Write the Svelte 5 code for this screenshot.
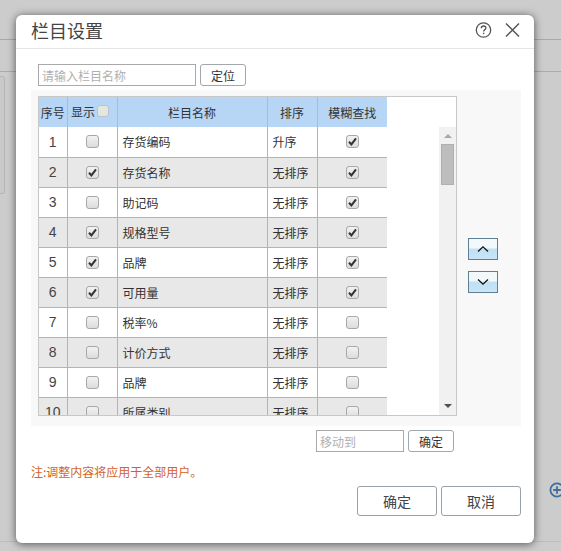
<script>
  const rows = [
    { no: 1, show: false, name: '存货编码', sort: '升序', fuzzy: true },
    { no: 2, show: true, name: '存货名称', sort: '无排序', fuzzy: true },
    { no: 3, show: false, name: '助记码', sort: '无排序', fuzzy: true },
    { no: 4, show: true, name: '规格型号', sort: '无排序', fuzzy: true },
    { no: 5, show: true, name: '品牌', sort: '无排序', fuzzy: true },
    { no: 6, show: true, name: '可用量', sort: '无排序', fuzzy: true },
    { no: 7, show: false, name: '税率%', sort: '无排序', fuzzy: false },
    { no: 8, show: false, name: '计价方式', sort: '无排序', fuzzy: false },
    { no: 9, show: false, name: '品牌', sort: '无排序', fuzzy: false },
    { no: 10, show: false, name: '所属类别', sort: '无排序', fuzzy: false }
  ];
</script>

{#snippet check(on)}
  <span class="check">
    {#if on}
      <svg viewBox="0 0 11 11" width="11" height="11"><path d="M2 5.8 L4.4 8.4 L9 2.4" fill="none" stroke="#333" stroke-width="2"/></svg>
    {/if}
  </span>
{/snippet}

<div class="page">
  <div class="backdrop">
    <div class="line first"></div>
    <div class="band">
      <div class="side-panel"></div>
    </div>
    <div class="plus">
      <svg viewBox="0 0 16 16" width="16" height="16"><circle cx="8" cy="8" r="6.6" fill="none" stroke="#3f6f9f" stroke-width="1.8"/><path d="M4.2 8H11.8M8 4.2V11.8" stroke="#3f6f9f" stroke-width="1.8"/></svg>
    </div>
    <div class="line last"></div>
  </div>

  <div class="dialog">
    <header>
      <h2>栏目设置</h2>
      <div class="tools">
        <svg viewBox="0 0 18 18" width="18" height="18">
          <circle cx="8.5" cy="9" r="7.2" fill="none" stroke="#555" stroke-width="1.3"/>
          <path d="M6.3 7.2C6.3 5.7 7.3 5 8.6 5C9.9 5 10.9 5.8 10.9 7C10.9 8.6 8.6 8.7 8.6 10.6" fill="none" stroke="#555" stroke-width="1.3"/>
          <rect x="7.9" y="11.7" width="1.4" height="1.5" fill="#555"/>
        </svg>
        <svg viewBox="0 0 16 16" width="16" height="16"><path d="M2 1.5L15 14.5M15 1.5L2 14.5" stroke="#555" stroke-width="1.5" fill="none"/></svg>
      </div>
    </header>

    <div class="search">
      <input class="field" placeholder="请输入栏目名称" />
      <button class="small">定位</button>
    </div>

    <div class="panel">
      <div class="table-box">
        <div class="table-scroll">
          <table>
            <thead>
              <tr>
                <th class="c-no">序号</th>
                <th class="c-show"><span class="show-head">显示<span class="check head-check"></span></span></th>
                <th class="c-name">栏目名称</th>
                <th class="c-sort">排序</th>
                <th class="c-fuzzy">模糊查找</th>
              </tr>
            </thead>
            <tbody>
              {#each rows as row, i}
                <tr class:alt={i % 2 === 1}>
                  <td class="num">{row.no}</td>
                  <td class="mid">{@render check(row.show)}</td>
                  <td class="text">{row.name}</td>
                  <td class="text">{row.sort}</td>
                  <td class="mid">{@render check(row.fuzzy)}</td>
                </tr>
              {/each}
            </tbody>
          </table>
        </div>
        <div class="scrollbar">
          <span class="arrow up"></span>
          <span class="thumb"></span>
          <span class="arrow down"></span>
        </div>
      </div>

      <div class="movers">
        <button class="mover" aria-label="上移">
          <svg viewBox="0 0 14 8" width="14" height="8"><path d="M2 6.5L7 1.8L12 6.5" fill="none" stroke="#111" stroke-width="1.3"/></svg>
        </button>
        <button class="mover" aria-label="下移">
          <svg viewBox="0 0 14 8" width="14" height="8"><path d="M2 1.5L7 6.2L12 1.5" fill="none" stroke="#111" stroke-width="1.3"/></svg>
        </button>
      </div>
    </div>

    <div class="move-to">
      <input class="field short" placeholder="移动到" />
      <button class="small">确定</button>
    </div>

    <p class="note">注:调整内容将应用于全部用户。</p>

    <footer>
      <button class="big">确定</button>
      <button class="big">取消</button>
    </footer>
  </div>
</div>

<style>
  :global(body) {
    margin: 0;
    background: #cccccc;
  }

  .page {
    position: relative;
    height: 551px;
    overflow: hidden;
    background: #cccccc;
    font-family: "Noto Sans CJK SC", "Liberation Sans", sans-serif;
    color: #333;
  }

  .backdrop {
    height: 100%;
    padding-top: 39px;
    box-sizing: border-box;
  }

  .line.first {
    height: 1px;
    background: #a9a9a9;
  }

  .line.last {
    height: 1px;
    margin-top: 43px;
    background: #bdbdbd;
  }

  .band {
    margin-top: 31px;
    height: 123px;
    border-top: 1px solid #a3adb5;
    padding-top: 4px;
    box-sizing: border-box;
  }

  .side-panel {
    width: 5px;
    height: 118px;
    background: #c9c9c9;
    border: 1px solid #b5b5b5;
    border-left: none;
    border-radius: 0 3px 3px 0;
    box-sizing: border-box;
  }

  .plus {
    margin: 288px 0 0 549px;
    line-height: 0;
  }

  .dialog {
    position: absolute;
    left: 16px;
    top: 15px;
    width: 518px;
    height: 528px;
    background: #fff;
    border-radius: 6px;
    box-shadow: 0 1px 8px rgba(0, 0, 0, 0.6);
    display: flex;
    flex-direction: column;
    box-sizing: border-box;
  }

  header {
    height: 34px;
    flex: none;
    box-sizing: border-box;
    border-bottom: 1px solid #e5e5e5;
    display: flex;
    align-items: center;
    justify-content: space-between;
    padding: 0 14px 3px 15px;
  }

  h2 {
    margin: 0;
    font-size: 18px;
    font-weight: 400;
    color: #444;
    line-height: 24px;
  }

  .tools {
    display: flex;
    align-items: center;
    gap: 11px;
  }

  .search {
    display: flex;
    gap: 4px;
    margin: 15px 0 0 22px;
    height: 22px;
  }

  .field {
    width: 158px;
    height: 22px;
    box-sizing: border-box;
    border: 1px solid #a9a9a9;
    padding: 0 3px;
    font: 12px "Noto Sans CJK SC", sans-serif;
    outline: none;
    background: #fff;
  }

  .field.short {
    width: 88px;
  }

  .field::placeholder {
    color: #b0b0b0;
    opacity: 1;
  }

  .small {
    width: 46px;
    height: 22px;
    padding: 0;
    background: #fff;
    border: 1px solid #a0a8ae;
    border-radius: 3px;
    font: 12px "Noto Sans CJK SC", sans-serif;
    color: #333;
  }

  .panel {
    margin: 4px 13px 0 15px;
    height: 336px;
    flex: none;
    background: #f8f8f8;
    padding: 6px 0 0 7px;
    box-sizing: border-box;
    display: flex;
  }

  .table-box {
    width: 419px;
    height: 320px;
    box-sizing: border-box;
    border: 1px solid #c8c8c8;
    background: #fff;
    display: flex;
    justify-content: space-between;
    overflow: hidden;
  }

  .table-scroll {
    width: 348px;
    height: 318px;
    overflow: hidden;
  }

  table {
    border-collapse: collapse;
    table-layout: fixed;
    width: 348px;
    font-size: 12px;
  }

  th {
    background: #b7d5f5;
    height: 30px;
    padding: 0;
    font-weight: 400;
    color: #333;
    border-left: 1px solid #a8bdd0;
    text-align: center;
    box-sizing: border-box;
  }

  th:first-child {
    border-left: none;
  }

  .c-no { width: 28px; }
  .c-show { width: 50px; }
  .c-name { width: 150px; }
  .c-sort { width: 50px; }
  .c-fuzzy { width: 70px; }

  .show-head {
    display: inline-flex;
    align-items: center;
    gap: 2px;
    position: relative;
    top: -1px;
    left: -2px;
  }

  td {
    height: 30px;
    padding: 0;
    box-sizing: border-box;
    border: 1px solid #b4b4b4;
    border-top: none;
  }

  td:first-child {
    border-left: none;
  }

  tr.alt td {
    background: #e8e8e8;
  }

  .num {
    text-align: center;
    font-family: "Liberation Sans", sans-serif;
    font-size: 14px;
    color: #444;
  }

  .mid {
    text-align: center;
    line-height: 0;
  }

  .text {
    padding-left: 5px;
    color: #333;
  }

  .check {
    display: inline-flex;
    align-items: center;
    justify-content: center;
    width: 13px;
    height: 13px;
    box-sizing: border-box;
    border: 1px solid #a8a8a8;
    border-radius: 3px;
    background: linear-gradient(#f2f2f2, #dcdcdc);
  }

  .head-check {
    width: 12px;
    height: 12px;
    background: #e6e6e0;
    border-color: #b9c4ce;
  }

  .scrollbar {
    width: 17px;
    height: 100%;
    margin-top: 30px;
    background: #f1f1f1;
    display: flex;
    flex-direction: column;
    align-items: center;
    flex: none;
  }

  .arrow {
    width: 0;
    height: 0;
    border-left: 4px solid transparent;
    border-right: 4px solid transparent;
  }

  .arrow.up {
    margin-top: 7px;
    border-bottom: 4px solid #a8a8a8;
  }

  .arrow.down {
    margin-top: 219px;
    border-top: 4px solid #505050;
  }

  .thumb {
    width: 13px;
    height: 41px;
    margin-top: 6px;
    background: #bdbdbd;
    border: 1px solid #b0b0b0;
    box-sizing: border-box;
  }

  .movers {
    margin: 142px 0 0 11px;
    display: flex;
    flex-direction: column;
    gap: 11px;
  }

  .mover {
    width: 30px;
    height: 22px;
    padding: 0;
    border: 1px solid #5f7f94;
    background: linear-gradient(#f3f8fb 0 45%, #bfe0f5 50%, #c9e4f6);
    display: flex;
    align-items: center;
    justify-content: center;
  }

  .move-to {
    display: flex;
    justify-content: flex-end;
    gap: 4px;
    margin: 4px 80px 0 0;
    height: 22px;
  }

  .note {
    margin: 11px 0 0 15px;
    font-size: 12px;
    line-height: 17px;
    color: #d2622a;
  }

  footer {
    display: flex;
    justify-content: flex-end;
    gap: 4px;
    margin: 6px 13px 0 0;
  }

  .big {
    width: 80px;
    height: 30px;
    padding: 0;
    background: #fff;
    border: 1px solid #9aa2a8;
    border-radius: 3px;
    font: 14px "Noto Sans CJK SC", sans-serif;
    color: #444;
  }
</style>
